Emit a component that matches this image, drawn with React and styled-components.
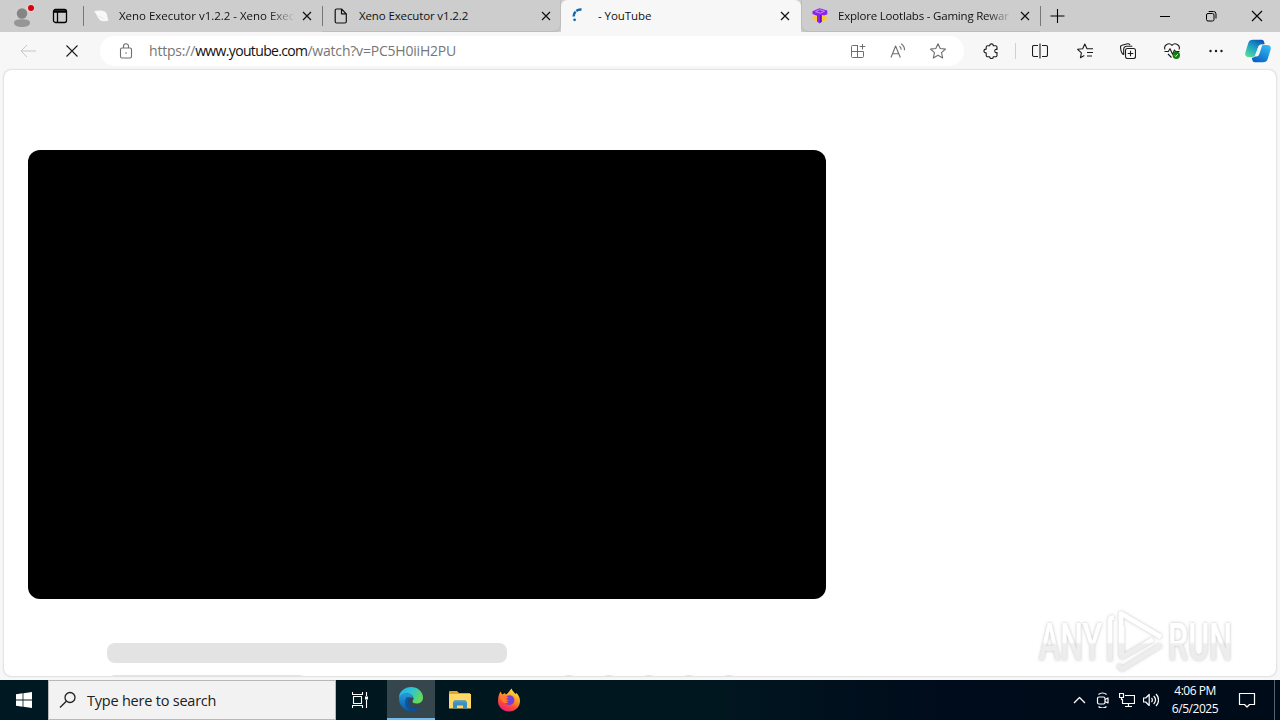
import React from "react";
import styled, { createGlobalStyle } from "styled-components";

export default function App() {
  return (
    <Screen>
      <GlobalStyle />
      <TabStrip>
        <Profile>
          <ProfileIcon />
        </Profile>
        <TabActions>
          <TabActionsIcon />
        </TabActions>
        <Tab $width={239} $line>
          <Favicon>
            <LeafIcon />
          </Favicon>
          <TabTitle $fade $spacing={-0.02}>
            Xeno Executor v1.2.2 - Xeno Exec
          </TabTitle>
          <CloseIcon />
        </Tab>
        <Tab $width={239} $line $corner="right">
          <Favicon $wide>
            <PageIcon />
          </Favicon>
          <TabTitle $spacing={-0.13}>Xeno Executor v1.2.2</TabTitle>
          <CloseIcon />
        </Tab>
        <Tab $width={240} $active>
          <Favicon $wide>
            <SpinnerIcon />
          </Favicon>
          <TabTitle $spacing={-0.05}> - YouTube</TabTitle>
          <CloseIcon />
        </Tab>
        <Tab $width={239} $corner="left">
          <Favicon>
            <LootIcon />
          </Favicon>
          <TabTitle $fade $spacing={-0.2}>
            Explore Lootlabs - Gaming Rewar
          </TabTitle>
          <CloseIcon />
        </Tab>
        <NewTab>
          <PlusIcon />
        </NewTab>
        <WindowButtons>
          <MinimizeIcon />
          <RestoreIcon />
          <WindowCloseIcon />
        </WindowButtons>
      </TabStrip>

      <Toolbar>
        <NavButton $width={56} $color="#c6c6c6">
          <BackIcon />
        </NavButton>
        <NavButton $width={32}>
          <StopIcon />
        </NavButton>
        <AddressBar>
          <LockIcon />
          <Url>
            https://<b>www.youtube.com</b>/watch?v=PC5H0iiH2PU
          </Url>
          <AddressActions>
            <AppsIcon />
            <ReadAloudIcon />
            <StarIcon />
          </AddressActions>
        </AddressBar>
        <ToolButton $width={54}>
          <PuzzleIcon />
        </ToolButton>
        <Divider />
        <ToolButton $width={48}>
          <SplitIcon />
        </ToolButton>
        <ToolButton $width={42}>
          <FavoritesIcon />
        </ToolButton>
        <ToolButton $width={44}>
          <CollectionsIcon />
        </ToolButton>
        <ToolButton $width={44}>
          <HeartIcon />
        </ToolButton>
        <ToolButton $width={44}>
          <DotsIcon />
        </ToolButton>
        <ToolButton $width={40}>
          <CopilotIcon />
        </ToolButton>
      </Toolbar>

      <Viewport>
        <Page>
          <Player />
          <TitleSkeleton />
          <MetaRow>
            <MetaLine />
            <MetaDots>
              {[0, 1, 2, 3, 4].map((n) => (
                <MetaDot key={n} />
              ))}
            </MetaDots>
          </MetaRow>
        </Page>
      </Viewport>
      <Watermark>
        <AnyRunLogo />
      </Watermark>

      <Taskbar>
        <TaskCell $width={48}>
          <WindowsIcon />
        </TaskCell>
        <SearchBox>
          <SearchIcon />
          <span>Type here to search</span>
        </SearchBox>
        <TaskCell $width={51} $nudge={3}>
          <TaskViewIcon />
        </TaskCell>
        <TaskCell $width={48} $active>
          <EdgeIcon />
        </TaskCell>
        <TaskCell $width={49}>
          <FolderIcon />
        </TaskCell>
        <TaskCell $width={49}>
          <FirefoxIcon />
        </TaskCell>
        <Tray>
          <ChevronIcon />
          <MeetIcon />
          <NetworkIcon />
          <SpeakerIcon />
        </Tray>
        <Clock>
          <Time>4:06 PM</Time>
          <Day>6/5/2025</Day>
        </Clock>
        <TaskCell $width={54}>
          <NotificationIcon />
        </TaskCell>
        <ShowDesktop />
      </Taskbar>
    </Screen>
  );
}

// shared stroke icon
function Line({ size = 16, width = 1.1, children }) {
  return (
    <svg
      width={size}
      height={size}
      viewBox={`0 0 ${size} ${size}`}
      fill="none"
      stroke="currentColor"
      strokeWidth={width}
      strokeLinejoin="round"
    >
      {children}
    </svg>
  );
}

const ProfileIcon = () => (
  <svg width="24" height="26" viewBox="0 0 24 26">
    <circle cx="12" cy="14" r="11" fill="#d0cecc" />
    <circle cx="12" cy="10.5" r="5.2" fill="#858585" />
    <path d="M4 20c0-3 3-3.7 8-3.7s8 .7 8 3.7c0 2.600-4 4-8 4s-8-1.400-8-4z" fill="#969696" />
    <circle cx="21" cy="5" r="4" fill="#ead0d0" />
    <circle cx="21" cy="5" r="3" fill="#d90012" />
  </svg>
);

const TabActionsIcon = () => (
  <Line width={1.3}>
    <rect x="1.500" y="1.500" width="13" height="13" rx="2" />
    <path d="M2 3.500h12" strokeWidth="2.500" />
    <path d="M5.500 4v10" />
  </Line>
);

const LeafIcon = () => (
  <svg width="16" height="16" viewBox="0 0 16 16">
    <path d="M1 3.500c4-1.500 8-1.300 11 .3C14.500 5.500 14 9 15.500 12.500c-4 1.200-8 .8-9.500-1.500C4.500 9.500 3.500 5.500 1 3.500z" fill="#f8f8f8" />
    <path d="M5.500 8l6 3" stroke="#e6e6e2" />
  </svg>
);

const PageIcon = () => (
  <Line width={1.2}>
    <path d="M3.700 1h4.800l4.800 4.800v7.700a1.500 1.500 0 0 1-1.500 1.500H3.700a1.500 1.500 0 0 1-1.500-1.500v-11A1.500 1.500 0 0 1 3.700 1zM8.500 1v4.800h4.800" />
  </Line>
);

const SpinnerIcon = () => (
  <svg width="16" height="16" viewBox="0 0 16 16" fill="none" stroke="#1766b0" strokeWidth="2.500">
    <path d="M9.500 1.600C5 1.200 1.500 4 1.600 9" strokeDasharray="5.500 .9" />
    <circle cx="2.600" cy="11.800" r="1.400" fill="#1766b0" stroke="none" />
  </svg>
);

const LootIcon = () => (
  <svg width="16" height="16" viewBox="0 0 16 16">
    <path d="M.5 9l4.500-2v6.200L.5 11zM10 7l5.300 2v2.500L10 13.800z" fill="#ffc92f" />
    <path d="M.5 3.200L7.500.2l7.800 2.300v3.700L12 7.500 9.800 6.800v7L7.500 15.500 5 13.500V7.800L.5 6z" fill="#8b22ed" />
    <path d="M3.500 3.700l4-2 5 1.500-4 2z" fill="none" stroke="#d6a4ff" strokeWidth=".8" />
    <path d="M8 7l1.500-.5v7L8 15z" fill="#5f10bd" />
  </svg>
);

const CloseIcon = () => (
  <Line size={10} width={1.2}>
    <path d="M1 1l8 8M9 1l-8 8" />
  </Line>
);

const PlusIcon = () => (
  <Line width={1.1}>
    <path d="M7.500 1v14M.5 8h14" />
  </Line>
);

const MinimizeIcon = () => (
  <Line size={12} width={1}>
    <path d="M1 6.500h10" />
  </Line>
);

const RestoreIcon = () => (
  <Line size={12} width={1}>
    <rect x="1.500" y="3.500" width="7.500" height="7.500" rx="1.500" />
    <path d="M3.700 1.500h4.800a2.500 2.500 0 0 1 2.500 2.500v4.500" />
  </Line>
);

const WindowCloseIcon = () => (
  <Line size={12}>
    <path d="M1 1l10 10M11 1L1 11" />
  </Line>
);

const BackIcon = () => (
  <Line width={1}>
    <path d="M7 2L1 8l6 6M1 8h15" />
  </Line>
);

const StopIcon = () => (
  <Line size={14} width={1.1}>
    <path d="M1.500 1.500l11 11M12.500 1.500l-11 11" />
  </Line>
);

const LockIcon = () => (
  <Line width={1.1}>
    <rect x="2.500" y="5" width="11" height="10" rx="1.500" />
    <path d="M5.500 5V3.200a2.500 2.500 0 0 1 5 0V5" />
    <circle cx="8" cy="10" r=".8" fill="currentColor" stroke="none" />
  </Line>
);

const AppsIcon = () => (
  <Line width={1}>
    <path d="M8 2.500H2.500a1 1 0 0 0-1 1v10a1 1 0 0 0 1 1h10a1 1 0 0 0 1-1V8.500h-12M7.500 2.500v12M12.500 1v5.500M9.700 3.500h5.600" />
  </Line>
);

const ReadAloudIcon = () => (
  <Line>
    <path d="M1 14.500L5.600 3l4.700 11.500M2.500 10.700h6.300M9.500 3.200c1.200.9 1.700 2 1.700 3.600M11.200.8c2.200 1.500 3.400 3.700 3.300 6.500" />
  </Line>
);

const StarIcon = () => (
  <Line>
    <path d="M8 .8l2.200 4.700 5.300.6-4 3.600 1.200 5.300L8 12.300l-4.700 2.700 1.200-5.300-4-3.600 5.300-.6z" />
  </Line>
);

const PuzzleIcon = () => (
  <Line width={1.100}>
    <path d="M4.700 2.700h2a1.800 1.800 0 0 1 3.600 0h2.200a1.500 1.500 0 0 1 1.500 1.500v2.300c-3-1-3 4 0 3v2.800a1.500 1.500 0 0 1-1.500 1.500h-2.200a1.800 1.800 0 0 1-3.600 0h-2a1.500 1.500 0 0 1-1.500-1.500V9.900c-3 0-3-3.800 0-3.800V4.200a1.500 1.500 0 0 1 1.500-1.500z" />
  </Line>
);

const SplitIcon = () => (
  <Line width={1.100}>
    <path d="M6 2.500H2a1.500 1.500 0 0 0-1.500 1.500v8A1.500 1.500 0 0 0 2 13.500h4M10 2.500h4a1.500 1.500 0 0 1 1.500 1.500v8a1.500 1.500 0 0 1-1.500 1.500h-4M8 .5v15" />
  </Line>
);

const FavoritesIcon = () => (
  <Line width={1.100}>
    <path d="M14 5.700h-4L7.800 1 5.700 5.700.6 6.300l3.800 3.500-1 5 3.900-2.200M9.500 5.700H16M10 9.500h6M10 13h5" />
  </Line>
);

const CollectionsIcon = () => (
  <Line width={1.100}>
    <rect x="5.500" y="5.500" width="10" height="10" rx="2" />
    <path d="M10.500 7.700v5.600M7.700 10.500h5.600M3.700 11.700C1.800 10.700.8 8 .5 4.500a2 2 0 0 1 1.500-2.200L7.500.8a2 2 0 0 1 2.500 1.400M3.700 11.700V6a2.800 2.800 0 0 1 2.800-2.800h5.800" />
  </Line>
);

const HeartIcon = () => (
  <Line width={1.100}>
    <path d="M7.500 14.500L4 11M1 6.500C-.8 2 5-1.200 8 2.300c3-3.500 8.800-.3 7 4.200M.5 8.500h3.800L6 5.700l2.600 5.500L10.500 7l1 1.500h4" />
    <circle cx="12.300" cy="12.300" r="3.700" fill="#107c10" stroke="none" />
    <path d="M10.800 12.500l1 1 2-2.300" stroke="#d7f5d7" strokeWidth="1" />
  </Line>
);

const DotsIcon = () => (
  <Line>
    <g fill="currentColor" stroke="none">
      <circle cx="2.500" cy="8" r="1.200" />
      <circle cx="8" cy="8" r="1.200" />
      <circle cx="13.500" cy="8" r="1.200" />
    </g>
  </Line>
);

const CopilotIcon = () => (
  <svg width="26" height="24" viewBox="0 0 26 24">
    <defs>
      <linearGradient id="cp1" x1="0.200" y1="1" x2=".8" y2="0">
        <stop offset="0" stopColor="#54dc98" />
        <stop offset=".5" stopColor="#1fa3c4" />
        <stop offset="1" stopColor="#0954b5" />
      </linearGradient>
      <linearGradient id="cp2" x1="0.200" y1="1" x2=".8" y2="0">
        <stop offset="0" stopColor="#075fc5" />
        <stop offset="1" stopColor="#35b9f4" />
      </linearGradient>
    </defs>
    <path d="M8 .8h8.500c2 0 2.700 1.500 3.200 4.200l-4.200 1c-1.500.3-2.200 1.500-2.800 3.500L11 15c-.7 2-1.800 3-4 3H4c-3 0-4.500-1.500-3.500-5L3.300 4C4.100 1.800 5.300.8 8 .8z" fill="url(#cp1)" />
    <path d="M18 23.200h-8c-2 0-2.700-1.500-3.200-4.500 2.700 0 4-1.700 4.700-4.700h2.200L15 9c.7-2 1.800-3 4-3h3c3 0 4.500 1.500 3.500 5l-2.800 9c-.8 2.200-2 3.200-4.700 3.200z" fill="url(#cp2)" />
    <path d="M13.500 7.500c.5-1.300 1.300-2 2.500-2h1.500l-3 9c-.6 2-1.500 3-3 3H9.500z" fill="#f7f7f7" />
  </svg>
);

const AnyRunLogo = () => (
  <svg width="204" height="68" viewBox="0 0 204 68">
    <defs>
      <filter id="wmShadow" x="-5%" y="-10%" width="110%" height="120%">
        <feDropShadow dx="0" dy="0" stdDeviation="1.500" floodColor="#777" floodOpacity=".5" />
      </filter>
      <linearGradient id="wmFill" x1="0" y1="12" x2="0" y2="60" gradientUnits="userSpaceOnUse">
        <stop offset="0" stopColor="#fff" />
        <stop offset=".5" stopColor="#fff" />
        <stop offset=".55" stopColor="#eee" />
        <stop offset="1" stopColor="#ececec" />
      </linearGradient>
    </defs>
    <g filter="url(#wmShadow)">
      <g fill="url(#wmFill)" fontFamily="Roboto" fontSize="51" fontWeight="500">
        <text x="5" y="53.500" textLength="63" lengthAdjust="spacingAndGlyphs">
          ANY
        </text>
        <text x="134" y="53.500" textLength="64" lengthAdjust="spacingAndGlyphs">
          RUN
        </text>
      </g>
      <path
        d="M76 55V14.500c0-2 1.500-3 4-3M87 50V7.500L127 31M88 20v31l31-17.500M84 59l4 4L127 39"
        fill="none"
        stroke="url(#wmFill)"
        strokeWidth="4.500"
        strokeLinejoin="round"
      />
    </g>
  </svg>
);

const WindowsIcon = () => (
  <svg width="16" height="16" viewBox="0 0 16 16" fill="#fff">
    <path d="M0 2.200l6.600-.9v6.300H0zM7.400 1.200L16 0v7.600H7.400zM0 8.400h6.600v6.300L0 13.800zM7.400 8.400H16V16l-8.600-1.200z" />
  </svg>
);

const SearchIcon = () => (
  <Line size={18} width={1.300}>
    <circle cx="11" cy="6.500" r="5" />
    <path d="M7.300 10.200L1 16.500" />
  </Line>
);

const TaskViewIcon = () => (
  <Line width={1.100}>
    <path d="M.5 0v2.500h10V0M1.500 4.500h8v7h-8zM.5 16v-2.500h10V16M14.500 0v4M14.500 8v8" />
    <rect x="13" y="4.500" width="3" height="3" fill="currentColor" stroke="none" />
  </Line>
);

const EdgeIcon = () => (
  <svg width="24" height="24" viewBox="0 0 24 24">
    <defs>
      <linearGradient id="ed1" x1="0" y1="0" x2="1" y2=".5">
        <stop offset="0" stopColor="#2aa9e8" />
        <stop offset=".5" stopColor="#2cc4d5" />
        <stop offset="1" stopColor="#65da58" />
      </linearGradient>
      <linearGradient id="ed2" x1="0" y1="0" x2="0" y2="1">
        <stop offset="0" stopColor="#259bdd" />
        <stop offset="1" stopColor="#0759aa" />
      </linearGradient>
    </defs>
    <path d="M0 11C0 4 6 0 12 0c7 0 12 5 12 10.500 0 4-3 6-6.500 6-2.500 0-4-1-4-2 0-.8 1-1.200 1-3C14.500 8 11 6.500 8 6.500c-4 0-7 2-8 4.500z" fill="url(#ed1)" />
    <path d="M0 11c1-3 4-4.500 7.500-4.500 4 0 7 2 7 5-1-1.500-5.500-1.500-5.500 3 0 4 4 7 8 7 2 0 3-.5 4.500-1C19.500 22.500 16 24 12 24 5 24 0 18.500 0 11z" fill="url(#ed2)" />
    <path d="M8 10c-4 4-2 12.500 5 13.800 4-.2 7-1.500 9-4.300-4 2-11 1-12-4.500-.2-2 .5-3.500 2-4.500z" fill="#114a8b" opacity=".75" />
  </svg>
);

const FolderIcon = () => (
  <svg width="22" height="20" viewBox="0 0 22 20">
    <path d="M0 1.500L1 1h7l2 2h11v15H0z" fill="#e5a52a" />
    <path d="M0 4h22v14.500H0z" fill="#ffd866" />
    <path d="M4 18.500v-6l1.500-2h11l1.500 2v6h-4v-3H8v3z" fill="#3b8fc5" />
    <path d="M5.500 10.500h11l1.500 2H4z" fill="#4a9ccc" />
  </svg>
);

const FirefoxIcon = () => (
  <svg width="24" height="24" viewBox="0 0 24 24">
    <defs>
      <linearGradient id="ff1" x1=".8" y1="0" x2=".3" y2="1">
        <stop offset="0" stopColor="#fff04a" />
        <stop offset=".4" stopColor="#ff9c24" />
        <stop offset=".7" stopColor="#ff4a38" />
        <stop offset="1" stopColor="#e51f7a" />
      </linearGradient>
    </defs>
    <path d="M3.500 3.500l1.700 3L8 5l.5 1.500C11 5.500 12 3.500 14.500.5c1 2.500 2.500 3.500 4 5.500l1-1c2.200 2.500 3.500 4.500 3.500 8 0 6-5 10.500-11 10.500S1 19 1 13c0-4 1-7 2.500-9.500z" fill="url(#ff1)" />
    <path d="M8 9c2-1.500 5-2.500 7.500-.8 2.700 1.800 2.500 6.300-.5 8.100-3 1.700-7 .2-7.500-2.800 2 .6 4-.5 4-1.500-1.500-.2-3-1-3.500-3z" fill="#7541d9" />
    <path d="M3 10c2-3 4-3.500 6.500-2l1.800 1.700-2.500 1.500c0 2 .7 2.800 2.500 3-2 2-6 1-6.500-2z" fill="#ff7a2f" />
  </svg>
);

const ChevronIcon = () => (
  <Line size={14} width={1.300}>
    <path d="M1 10l5.500-5.500L12 10" />
  </Line>
);

const MeetIcon = () => (
  <Line width={1.200}>
    <rect x="2.500" y="5" width="7.500" height="7" rx="1.500" />
    <path d="M10 7.500L13 6v5L10 9.500M3.500 2.500C5.500.5 9.500.5 11.500 2.500M3.500 14.500c2 2 6 2 8 0" />
  </Line>
);

const NetworkIcon = () => (
  <Line width={1.200}>
    <path d="M6 3.500h9.500v8H3.500V7M9.500 11.500v3M6 14.500h7M.5 1.500h4v4h-4zM2.500 5.500V8" />
  </Line>
);

const SpeakerIcon = () => (
  <Line width={1.200}>
    <path d="M.5 6h2.200l3.500-3.500v11L2.700 10H.5zM8.500 6c1 1.200 1 2.900 0 4M10.700 4c2.200 2.400 2.200 5.600 0 8M13 2c3.400 3.600 3.400 8.400 0 12" />
  </Line>
);

const NotificationIcon = () => (
  <Line size={18} width={1.200}>
    <path d="M1.500 2.500h15v11h-5L9 16l-2.500-2.500h-5z" />
  </Line>
);

const GlobalStyle = createGlobalStyle`
  * {
    box-sizing: border-box;
  }
  body {
    margin: 0;
    overflow: hidden;
    font-family: "Open Sans", "Noto Sans", sans-serif;
  }
  svg {
    display: block;
    flex-shrink: 0;
  }
`;

const Screen = styled.div`
  position: relative;
  width: 1280px;
  height: 720px;
  display: flex;
  flex-direction: column;
  background: #f7f7f7;
`;

const TabStrip = styled.div`
  height: 32px;
  display: flex;
  background: #cdcdcd;
`;

const Profile = styled.div`
  width: 44px;
  padding: 3px 0 0 10px;
`;

const TabActions = styled.div`
  width: 39px;
  padding: 8px 0 0 8px;
`;

const Tab = styled.div`
  width: ${(p) => p.$width}px;
  height: 32px;
  padding: 0 ${(p) => (p.$active ? 11 : 10)}px 0 ${(p) =>
  p.$corner === "left" ? 10 : 9}px;
  display: flex;
  align-items: center;
  flex-shrink: 0;
  color: #111;
  background: ${(p) =>
    p.$active
      ? "#f7f7f7"
      : p.$line
      ? "linear-gradient(#777, #777) 0 6px / 1px 20px no-repeat #cdcdcd"
      : "#cdcdcd"};
  border-radius: ${(p) =>
    p.$active
      ? "6px 6px 0 0"
      : p.$corner === "right"
      ? "0 0 6px 0"
      : p.$corner === "left"
      ? "0 0 0 6px"
      : "0"};
  box-shadow: ${(p) =>
    p.$corner === "right"
      ? "inset -1px -1px #bdbdbd"
      : p.$corner === "left"
      ? "inset 1px -1px #bdbdbd"
      : "none"};
`;

const Favicon = styled.div`
  width: ${(p) => (p.$wide ? 28 : 27)}px;
  padding-left: ${(p) => (p.$wide ? 2 : 1)}px;
`;

const TabTitle = styled.div`
  flex: 1;
  margin-right: 5px;
  overflow: hidden;
  white-space: nowrap;
  font-size: 11.5px;
  letter-spacing: ${(p) => p.$spacing}px;
  line-height: 20px;
  mask-image: ${(p) =>
    p.$fade ? "linear-gradient(90deg, #000 84%, transparent 99%)" : "none"};
`;

const NewTab = styled.div`
  width: 36px;
  padding: 8px 0 0 10px;
  background: linear-gradient(#777, #777) 0 6px / 1px 20px no-repeat;
`;

const WindowButtons = styled.div`
  display: flex;
  align-items: center;
  gap: 34px;
  margin-left: auto;
  padding-right: 17px;
`;

const Toolbar = styled.div`
  height: 38px;
  display: flex;
  align-items: center;
  color: #1b1b1b;
`;

const NavButton = styled.div`
  width: ${(p) => p.$width}px;
  display: flex;
  justify-content: center;
  color: ${(p) => p.$color || "#1b1b1b"};
`;

const AddressBar = styled.div`
  width: 864px;
  height: 30px;
  margin-left: 12px;
  padding: 0 18px;
  display: flex;
  align-items: center;
  flex-shrink: 0;
  color: #6e6e6e;
  background: #fff;
  border-radius: 15px;
`;

const Url = styled.div`
  margin: 0 0 2px 15px;
  color: #767676;
  font-size: 14px;
  letter-spacing: -0.2px;
  white-space: nowrap;
  b {
    color: #111;
    font-weight: 400;
    letter-spacing: -0.65px;
  }
`;

const AddressActions = styled.div`
  display: flex;
  gap: 24px;
  margin-left: auto;
`;

const ToolButton = styled.div`
  width: ${(p) => p.$width}px;
  display: flex;
  justify-content: center;
`;

const Divider = styled.div`
  width: 1px;
  height: 16px;
  margin-left: -3px;
  background: #d0d0d0;
`;

const Viewport = styled.div`
  height: 610px;
  padding: 0 4px 4px;
`;

const Page = styled.div`
  height: 606px;
  padding: 80px 24px 0;
  overflow: hidden;
  background: #fff;
  border-radius: 7px;
  box-shadow: 0 0 2px #aaa;
`;

const Player = styled.div`
  width: 798px;
  height: 449px;
  background: #000;
  border-radius: 12px;
`;

const TitleSkeleton = styled.div`
  width: 400px;
  height: 20px;
  margin: 44px 0 0 79px;
  background: #e3e3e3;
  border-radius: 8px;
`;

const MetaRow = styled.div`
  display: flex;
  margin: 12px 0 0 79px;
`;

const MetaLine = styled.div`
  width: 200px;
  height: 20px;
  background: #e3e3e3;
  border-radius: 8px;
`;

const MetaDots = styled.div`
  display: flex;
  gap: 16px;
  margin-left: 250px;
`;

const MetaDot = styled.div`
  width: 24px;
  height: 24px;
  background: #e3e3e3;
  border-radius: 50%;
`;

const Watermark = styled.div`
  position: absolute;
  left: 1034px;
  top: 606px;
`;

const Taskbar = styled.div`
  height: 40px;
  display: flex;
  color: #fff;
  background: linear-gradient(90deg, #001821, #001720 55%, #000b1b 75%, #000b1a);
`;

const TaskCell = styled.div`
  width: ${(p) => p.$width}px;
  padding-right: ${(p) => p.$nudge || 0}px;
  display: flex;
  align-items: center;
  justify-content: center;
  background: ${(p) => (p.$active ? "#35464d" : "transparent")};
  border-bottom: ${(p) => (p.$active ? "2px solid #76b9ed" : "0")};
`;

const SearchBox = styled.div`
  width: 288px;
  padding-left: 10px;
  display: flex;
  align-items: center;
  color: #202020;
  background: #f2f2f2;
  border: 1px solid #b8b8b8;
  font-size: 14.5px;
  letter-spacing: -0.22px;
  span {
    margin-left: 10px;
  }
`;

const Tray = styled.div`
  display: flex;
  align-items: center;
  gap: 8px;
  margin: 0 11px 0 auto;
`;

const Clock = styled.div`
  width: 50px;
  padding-top: 2px;
  font-size: 12px;
  line-height: 18px;
  text-align: center;
`;

const Time = styled.div`
  letter-spacing: -0.5px;
`;

const Day = styled.div`
  letter-spacing: -0.45px;
`;

const ShowDesktop = styled.div`
  width: 6px;
  border-left: 1px solid #59636b;
`;
